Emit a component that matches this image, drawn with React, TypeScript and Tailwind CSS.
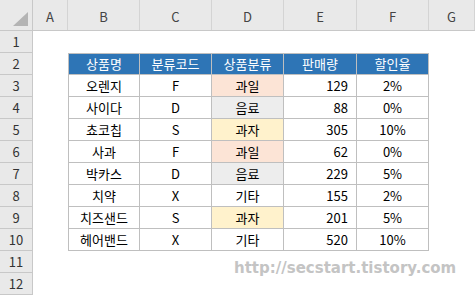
import React from "react";

// Sheet data: B2:F10
const rows = [
  { name: "오렌지", code: "F", cat: "과일", qty: 129, rate: "2%" },
  { name: "사이다", code: "D", cat: "음료", qty: 88, rate: "0%" },
  { name: "쵸코칩", code: "S", cat: "과자", qty: 305, rate: "10%" },
  { name: "사과", code: "F", cat: "과일", qty: 62, rate: "0%" },
  { name: "박카스", code: "D", cat: "음료", qty: 229, rate: "5%" },
  { name: "치약", code: "X", cat: "기타", qty: 155, rate: "2%" },
  { name: "치즈샌드", code: "S", cat: "과자", qty: 201, rate: "5%" },
  { name: "헤어밴드", code: "X", cat: "기타", qty: 520, rate: "10%" },
];

const catBg: Record<string, string> = {
  과일: "bg-[#fce4d6]",
  음료: "bg-[#ededed]",
  과자: "bg-[#fff2cc]",
  기타: "bg-white",
};

const columns = ["A", "B", "C", "D", "E", "F", "G"];
const colWidths = ["w-[35px]", "w-[72px]", "w-[72px]", "w-[72px]", "w-[73px]", "w-[72px]", "flex-1"];

function RowHead({ n }: { n: number }) {
  return (
    <div className="w-[33px] shrink-0 h-full flex items-center justify-center bg-[#e9e9e9] border-r border-b border-[#c8c8c8] text-[#333] text-[13px]">
      {n}
    </div>
  );
}

export default function App() {
  const cell = "h-full shrink-0 flex items-center border-r border-b border-[#bfbfbf] text-[13px] text-black";

  return (
    <div
      className="relative w-[475px] h-[296px] overflow-hidden bg-white"
      style={{ fontFamily: '"Noto Sans CJK KR", "Noto Sans", sans-serif' }}
    >
      {/* Column header */}
      <div className="flex h-[31px] bg-[#e9e9e9] border-b border-[#c8c8c8]">
        <div className="w-[33px] shrink-0 h-full border-r border-[#c8c8c8] flex items-end justify-end pr-[3px] pb-[3px]">
          <svg width="16" height="15" viewBox="0 0 16 15">
            <polygon points="0,14 15,14 15,0" fill="#b4b4b4" />
          </svg>
        </div>
        {columns.map((c, i) => (
          <div
            key={c}
            className={`${colWidths[i]} shrink-0 h-full flex items-center justify-center pt-[3px] border-r border-[#d4d4d4] text-[#444] text-[13px]`}
          >
            {c}
          </div>
        ))}
      </div>

      {/* Row 1 */}
      <div className="flex h-[22px]">
        <RowHead n={1} />
      </div>

      {/* Row 2: table header */}
      <div className="flex h-[22px]">
        <RowHead n={2} />
        <div className="w-[35px] shrink-0" />
        {["상품명", "분류코드", "상품분류", "판매량", "할인율"].map((h, i) => (
          <div
            key={h}
            className={`${colWidths[i + 1]} ${cell} justify-center bg-[#2e75b6] text-white border-t ${i === 0 ? "border-l" : ""}`}
          >
            {h}
          </div>
        ))}
      </div>

      {/* Rows 3-10 */}
      {rows.map((r, idx) => (
        <div key={r.name} className="flex h-[22px]">
          <RowHead n={idx + 3} />
          <div className="w-[35px] shrink-0" />
          <div className={`w-[72px] ${cell} justify-center border-l`}>{r.name}</div>
          <div className={`w-[72px] ${cell} justify-center`}>{r.code}</div>
          <div className={`w-[72px] ${cell} justify-center ${catBg[r.cat]}`}>{r.cat}</div>
          <div className={`w-[73px] ${cell} justify-end pr-[8px]`}>{r.qty}</div>
          <div className={`w-[72px] ${cell} justify-center`}>{r.rate}</div>
        </div>
      ))}

      {/* Rows 11-12 */}
      <div className="flex h-[22px]">
        <RowHead n={11} />
      </div>
      <div className="flex h-[22px]">
        <RowHead n={12} />
      </div>

      {/* Watermark over the sheet */}
      <div
        className="absolute left-[234px] top-[261px] text-[15px] font-bold text-[#c4c4c4] leading-none whitespace-nowrap"
        style={{ fontFamily: '"DejaVu Sans", Verdana, sans-serif' }}
      >
        http://secstart.tistory.com
      </div>
    </div>
  );
}
